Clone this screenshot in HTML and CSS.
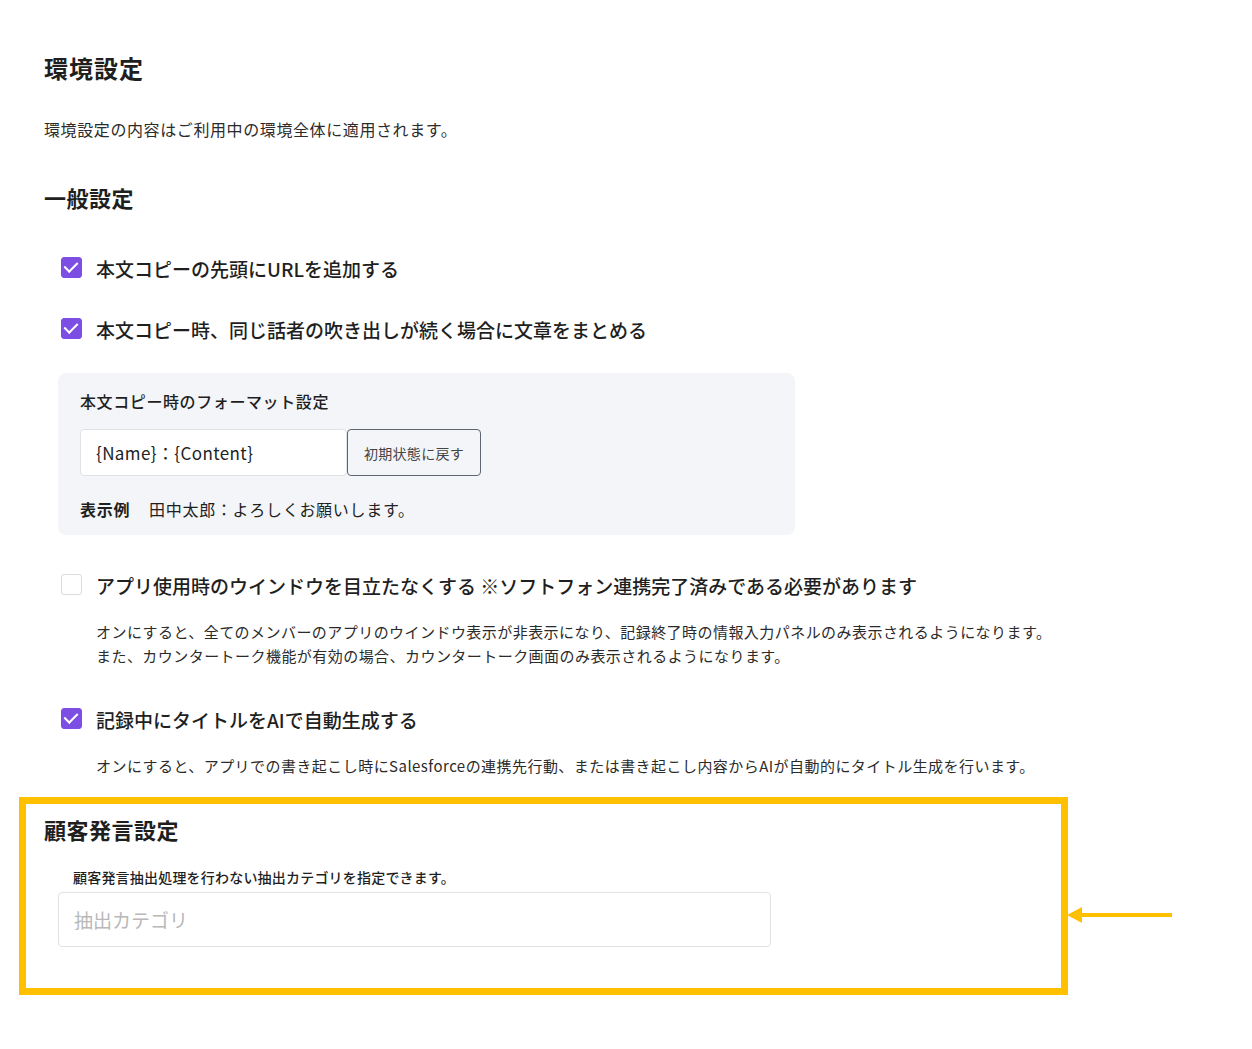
FILE: index.html
```html
<!DOCTYPE html>
<html lang="ja">
<head>
    <meta charset="UTF-8">
    <meta name="viewport" content="width=device-width, initial-scale=1.0">
    <title>環境設定</title>
    <link rel="stylesheet" href="styles.css">
</head>
<body>
    <div class="page">
        <h1>環境設定</h1>
        <p class="lead">環境設定の内容はご利用中の環境全体に適用されます。</p>

        <h2 class="section-title">一般設定</h2>

        <!-- URL追加 -->
        <label class="check-row first">
            <span class="checkbox checked"></span>
            <span class="check-label">本文コピーの先頭にURLを追加する</span>
        </label>

        <!-- 吹き出しまとめ -->
        <label class="check-row">
            <span class="checkbox checked"></span>
            <span class="check-label">本文コピー時、同じ話者の吹き出しが続く場合に文章をまとめる</span>
        </label>

        <!-- フォーマット設定 -->
        <div class="format-box">
            <div class="format-title">本文コピー時のフォーマット設定</div>
            <div class="format-inputs">
                <input type="text" class="format-input" value="{Name}：{Content}">
                <button type="button" class="reset-button">初期状態に戻す</button>
            </div>
            <div class="format-example">
                <span class="example-label">表示例</span>
                <span>田中太郎：よろしくお願いします。</span>
            </div>
        </div>

        <!-- ウインドウを目立たなくする -->
        <label class="check-row after-box">
            <span class="checkbox"></span>
            <span class="check-label">アプリ使用時のウインドウを目立たなくする ※ソフトフォン連携完了済みである必要があります</span>
        </label>
        <p class="help">オンにすると、全てのメンバーのアプリのウインドウ表示が非表示になり、記録終了時の情報入力パネルのみ表示されるようになります。<br>また、カウンタートーク機能が有効の場合、カウンタートーク画面のみ表示されるようになります。</p>

        <!-- タイトル自動生成 -->
        <label class="check-row after-help">
            <span class="checkbox checked"></span>
            <span class="check-label">記録中にタイトルをAIで自動生成する</span>
        </label>
        <p class="help">オンにすると、アプリでの書き起こし時にSalesforceの連携先行動、または書き起こし内容からAIが自動的にタイトル生成を行います。</p>

        <!-- 顧客発言設定 -->
        <div class="highlight">
            <h2 class="section-title">顧客発言設定</h2>
            <p class="customer-note">顧客発言抽出処理を行わない抽出カテゴリを指定できます。</p>
            <input type="text" class="category-input" placeholder="抽出カテゴリ">
            <svg class="arrow" width="106" height="18" viewBox="0 0 106 18">
                <polygon points="0,9 15,1 15,17" fill="#FFC000"/>
                <rect x="12" y="7" width="93" height="4" fill="#FFC000"/>
            </svg>
        </div>
    </div>
</body>
</html>
```

FILE: styles.css
```css
* {
    box-sizing: border-box;
    margin: 0;
    padding: 0;
}
body {
    background: #fff;
    color: #1f1f1f;
    font-family: 'Noto Sans CJK JP', 'Noto Sans', sans-serif;
}
.page {
    padding: 52px 0 40px 44px;
}
h1 {
    font-size: 24px;
    line-height: 32px;
    font-weight: 700;
    letter-spacing: 1px;
}
.lead {
    margin-top: 33px;
    font-size: 16px;
    line-height: 24px;
    color: #2b2b2b;
    letter-spacing: 0.6px;
}
.section-title {
    margin-top: 41px;
    font-size: 22px;
    line-height: 30px;
    font-weight: 700;
    letter-spacing: 0.5px;
}
.check-row {
    display: flex;
    align-items: center;
    gap: 14px;
    margin-top: 33px;
    margin-left: 17px;
    font-size: 19px;
    line-height: 28px;
    font-weight: 500;
}
.check-row.first {
    margin-top: 43px;
}
.check-row.after-box {
    margin-top: 37px;
}
.check-row.after-help {
    margin-top: 38px;
}
.checkbox {
    width: 21px;
    height: 21px;
    border: 1.5px solid #dcdcdc;
    border-radius: 3px;
    background: #fff;
    flex-shrink: 0;
    position: relative;
    top: -2px;
}
.checkbox.checked {
    background: #7c4ee4;
    border-color: #7c4ee4;
}
.checkbox.checked::after {
    content: "";
    position: absolute;
    left: 5px;
    top: 1px;
    width: 6px;
    height: 11px;
    border: solid #fff;
    border-width: 0 2.5px 2.5px 0;
    transform: rotate(45deg);
}
.format-box {
    width: 737px;
    margin-top: 29px;
    margin-left: 14px;
    padding: 16px 22px 14px;
    background: #f3f5f8;
    border-radius: 8px;
}
.format-title {
    font-size: 16px;
    line-height: 24px;
    font-weight: 500;
    letter-spacing: 0.6px;
}
.format-inputs {
    display: flex;
    margin-top: 16px;
}
.format-input {
    width: 267px;
    height: 47px;
    padding: 0 15px;
    border: 1px solid #dfe2e7;
    border-radius: 4px;
    background: #fff;
    font-family: inherit;
    font-size: 17px;
    letter-spacing: 0.4px;
    color: #222;
}
.reset-button {
    width: 134px;
    height: 47px;
    border: 1.5px solid #5f6670;
    border-radius: 4px;
    background: #f3f5f8;
    font-family: inherit;
    font-size: 14px;
    letter-spacing: 0.3px;
    color: #444;
}
.format-example {
    display: flex;
    gap: 19px;
    margin-top: 21px;
    font-size: 16px;
    line-height: 24px;
    letter-spacing: 0.7px;
}
.example-label {
    font-weight: 700;
}
.help {
    margin-top: 20px;
    margin-left: 52px;
    font-size: 15px;
    line-height: 24px;
    color: #2b2b2b;
    letter-spacing: 0.45px;
}
.highlight {
    position: relative;
    width: 1049px;
    margin-top: 19px;
    margin-left: -25px;
    padding: 10px 0 41px 18px;
    border: 7px solid #FFC000;
}
.highlight .section-title {
    margin-top: 0;
}
.customer-note {
    margin-top: 23px;
    margin-left: 29px;
    font-size: 14px;
    line-height: 20px;
    font-weight: 500;
    letter-spacing: 0.2px;
}
.category-input {
    display: block;
    width: 713px;
    height: 55px;
    margin-top: 5px;
    margin-left: 14px;
    padding: 0 15px;
    border: 1px solid #dfe2e7;
    border-radius: 4px;
    font-family: inherit;
    font-size: 19px;
}
.category-input::placeholder {
    color: #b8b8b8;
}
.arrow {
    position: absolute;
    left: 100%;
    top: 102px;
    margin-left: 6px;
}
```
